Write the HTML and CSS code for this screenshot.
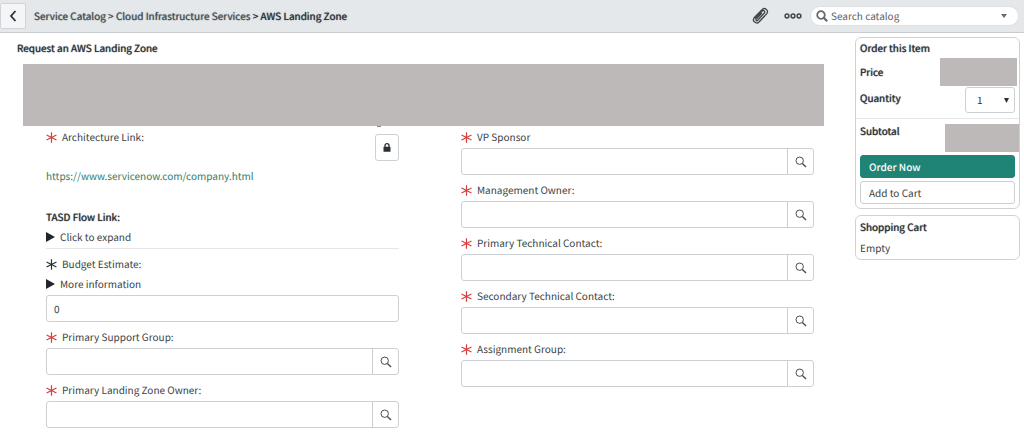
FILE: index.html
```html
<!DOCTYPE html>
<html lang="en">
<head>
<meta charset="utf-8">
<title>AWS Landing Zone</title>
<link rel="stylesheet" href="styles.css">
</head>
<body>
<svg class="sprite" aria-hidden="true">
  <symbol id="star" viewBox="0 0 12 12"><path d="M6 .4v11.2M.6 3.200l10.800 5.600M.6 8.800l10.800-5.600" fill="none" stroke="currentColor" stroke-width="1.300"/></symbol>
  <symbol id="lens" viewBox="0 0 12 12"><circle cx="4.700" cy="4.700" r="3.700" fill="none" stroke="currentColor"/><path d="M7.400 7.400l3.600 3.600" stroke="currentColor" stroke-width="1.400"/></symbol>
</svg>
<header class="topbar">
  <button class="back" aria-label="Back"><svg width="8" height="12" viewBox="0 0 8 12"><path d="M6.500 1L2 6l4.500 5" fill="none" stroke="currentColor" stroke-width="1.800"/></svg></button>
  <nav class="crumbs"><a href="#">Service Catalog</a> &gt; <a href="#">Cloud Infrastructure Services</a> <span class="current">&gt; AWS Landing Zone</span></nav>
  <button class="tool" aria-label="Attachments"><svg width="18" height="18" viewBox="0 0 18 18"><path d="M4 11.500L10.800 4.300c1.800-1.800 4 .2 2.400 2L6.700 13.300c-1 1-2.400-.1-1.400-1.200L11 6M13.800 9L8 15c-2.500 2.600-7.600-.8-4.600-4.500L11 2.600c2.800-2.700 7.300.7 4.600 4.300L8.800 14" fill="none" stroke="currentColor" stroke-width="1.300"/></svg></button>
  <button class="tool more" aria-label="More options"><svg width="18" height="6" viewBox="0 0 18 6"><g fill="none" stroke="currentColor" stroke-width="1.500"><circle cx="3" cy="3" r="1.900"/><circle cx="9" cy="3" r="1.900"/><circle cx="15" cy="3" r="1.900"/></g></svg></button>
  <div class="search">
    <svg width="12" height="12" viewBox="0 0 12 12"><circle cx="5" cy="5" r="3.800" fill="none" stroke="currentColor" stroke-width="1.800"/><path d="M7.600 7.600l3.600 3.600" stroke="currentColor" stroke-width="2.200"/></svg>
    <input type="text" placeholder="Search catalog" aria-label="Search catalog">
    <button class="drop" aria-label="Search options"><svg width="6" height="4" viewBox="0 0 6 4"><path d="M0 0h6L3 4z" fill="currentColor"/></svg></button>
  </div>
</header>
<div class="page">
  <main class="main">
    <h1 class="title">Request an AWS Landing Zone</h1>
    <div class="banner"></div>
    <form class="form">
      <div class="column">
        <div class="arch">
          <span class="label"><svg class="star"><use href="#star"/></svg>Architecture Link:</span>
          <button type="button" class="lock" aria-label="Unlock"><svg width="8" height="9" viewBox="0 0 8 9"><path d="M2 4V2.700a2 2 0 0 1 4 0V4" fill="none" stroke="currentColor" stroke-width="1.300"/><rect x=".5" y="3.800" width="7" height="5" rx=".6" fill="currentColor"/></svg></button>
        </div>
        <a class="link" href="https://www.servicenow.com/company.html">https://www.servicenow.com/company.html</a>
        <div class="flow">
          <h2 class="heading">TASD Flow Link:</h2>
          <button type="button" class="expand"><svg width="9" height="10" viewBox="0 0 9 10"><path d="M0 0l9 5-9 5z" fill="currentColor"/></svg>Click to expand</button>
        </div>
        <div class="budget">
          <label class="label" for="budget"><svg class="star done"><use href="#star"/></svg>Budget Estimate:</label>
          <button type="button" class="expand info"><svg width="9" height="10" viewBox="0 0 9 10"><path d="M0 0l9 5-9 5z" fill="currentColor"/></svg>More information</button>
          <div class="box"><input id="budget" type="text" value="0"></div>
        </div>
        <div class="field">
          <label class="label" for="support"><svg class="star"><use href="#star"/></svg>Primary Support Group:</label>
          <div class="box"><input id="support" type="text"><button type="button" aria-label="Look up"><svg class="lens"><use href="#lens"/></svg></button></div>
        </div>
        <div class="field">
          <label class="label" for="zone"><svg class="star"><use href="#star"/></svg>Primary Landing Zone Owner:</label>
          <div class="box"><input id="zone" type="text"><button type="button" aria-label="Look up"><svg class="lens"><use href="#lens"/></svg></button></div>
        </div>
      </div>
      <div class="column">
        <div class="field">
          <label class="label" for="vp"><svg class="star"><use href="#star"/></svg>VP Sponsor</label>
          <div class="box"><input id="vp" type="text"><button type="button" aria-label="Look up"><svg class="lens"><use href="#lens"/></svg></button></div>
        </div>
        <div class="field">
          <label class="label" for="mgmt"><svg class="star"><use href="#star"/></svg>Management Owner:</label>
          <div class="box"><input id="mgmt" type="text"><button type="button" aria-label="Look up"><svg class="lens"><use href="#lens"/></svg></button></div>
        </div>
        <div class="field">
          <label class="label" for="tech1"><svg class="star"><use href="#star"/></svg>Primary Technical Contact:</label>
          <div class="box"><input id="tech1" type="text"><button type="button" aria-label="Look up"><svg class="lens"><use href="#lens"/></svg></button></div>
        </div>
        <div class="field">
          <label class="label" for="tech2"><svg class="star"><use href="#star"/></svg>Secondary Technical Contact:</label>
          <div class="box"><input id="tech2" type="text"><button type="button" aria-label="Look up"><svg class="lens"><use href="#lens"/></svg></button></div>
        </div>
        <div class="field">
          <label class="label" for="group"><svg class="star"><use href="#star"/></svg>Assignment Group:</label>
          <div class="box"><input id="group" type="text"><button type="button" aria-label="Look up"><svg class="lens"><use href="#lens"/></svg></button></div>
        </div>
      </div>
    </form>
  </main>
  <aside class="side">
    <section class="card">
      <h2 class="heading">Order this Item</h2>
      <div class="row price"><span>Price</span><span class="amount"></span></div>
      <div class="row"><label for="qty">Quantity</label>
        <div class="qty"><select id="qty"><option>1</option><option>2</option></select><svg width="5" height="5" viewBox="0 0 5 5"><path d="M0 0h5L2.500 5z" fill="currentColor"/></svg></div></div>
      <div class="row subtotal"><span>Subtotal</span><span class="amount"></span></div>
      <button class="action primary">Order Now</button>
      <button class="action">Add to Cart</button>
    </section>
    <section class="card cart">
      <h2 class="heading">Shopping Cart</h2>
      <p class="empty">Empty</p>
    </section>
  </aside>
</div>
</body>
</html>
```
FILE: styles.css
```css
* { box-sizing: border-box; }
body {
  margin: 0;
  background: #fff;
  color: #3a3f44;
  font: 10px/20px "Noto Sans CJK SC", "Open Sans", sans-serif;
  text-rendering: geometricPrecision;
}
button, input, select { font: inherit; color: inherit; margin: 0; padding: 0; border: 0; background: none; text-rendering: inherit; }
h1, h2, p { margin: 0; font-size: inherit; }
svg { display: block; flex: none; }
.sprite { display: none; }

.topbar {
  display: flex;
  align-items: center;
  height: 33px;
  padding-right: 5px;
  background: #e4e8eb;
  border-bottom: 1px solid #c9cccf;
}
.back {
  display: flex;
  align-items: center;
  justify-content: center;
  width: 26px;
  height: 26px;
  background: #f4f5f7;
  border: 1px solid #d0d4d8;
  border-radius: 2px;
  color: #2b3035;
}
.crumbs, .title, .heading, .row > span, .row > label {
  font-weight: 400;
  text-shadow: 0 0 1px currentColor;
}
.crumbs { flex: 1; padding-left: 8px; color: #485156; }
.crumbs a { color: inherit; text-decoration: none; }
.current { color: #2b3035; text-shadow: 0 0 1px currentColor; }
.tool { display: flex; color: #42474c; }
.more { margin: 0 8px 0 15px; }
.search {
  display: flex;
  align-items: center;
  width: 209px;
  height: 20px;
  padding: 0 11px 0 5px;
  background: #fff;
  border: 1px solid #dde1e4;
  border-radius: 10px;
  color: #666b70;
}
.search input { flex: 1; min-width: 0; margin-left: 3px; height: 18px; outline: 0; }
.search input::placeholder { color: #5a5f64; opacity: 1; }

.page { display: flex; gap: 31px; padding: 4px 4px 6px 23px; }
.main { flex: 1; min-width: 0; }
.title { margin: 1px 0 6px -6px; color: #2b3035; }
.banner { height: 62px; background: #bdb9b8; }
.form {
  display: grid;
  grid-template-columns: 1fr 1fr;
  gap: 62px;
  padding: 0 10px 0 23px;
}
.label { display: flex; align-items: center; gap: 5px; height: 22px; }
.star { width: 11px; height: 11px; color: #d43f3f; }
.done { color: #2b3035; }
.field { margin-bottom: 4px; }
.box {
  display: flex;
  height: 27px;
  border: 1px solid #ccd0d3;
  border-radius: 3px;
}
.box input { flex: 1; min-width: 0; padding: 0 7px; }
.box button {
  display: flex;
  align-items: center;
  justify-content: center;
  width: 26px;
  border-left: 1px solid #ccd0d3;
}
.lens { width: 12px; height: 12px; color: #4a4f54; }

.arch { display: flex; justify-content: space-between; }
.lock {
  position: relative;
  display: flex;
  align-items: center;
  justify-content: center;
  width: 24px;
  height: 27px;
  margin-top: 8px;
  border: 1px solid #ccd0d3;
  border-radius: 3px;
  color: #2b3035;
}
.lock::before {
  content: "";
  position: absolute;
  top: -9px;
  left: 1px;
  width: 4px;
  height: 1px;
  background: #85888b;
}
.link { display: block; margin-top: 5px; color: #2f7d6b; text-decoration: none; }
.flow { margin-top: 21px; padding-bottom: 1px; border-bottom: 1px solid #e4e6e8; }
.heading { color: #2b3035; }
.expand { display: flex; align-items: center; gap: 5px; }
.expand svg { color: #20262b; }
.budget { margin: 4px 0; }
.info { height: 18px; margin-bottom: 2px; }

.side { width: 165px; }
.card {
  padding: 0 4px 4px;
  border: 1px solid #cfd2d4;
  border-radius: 6px;
}
.row { display: flex; justify-content: space-between; color: #2b3035; }
.amount { width: 77px; height: 28px; background: #bdb9b8; }
.price { margin-right: -2px; line-height: 28px; }
.row label { line-height: 24px; }
.qty { position: relative; margin: 1px 0 5px; }
.qty select {
  display: block;
  width: 50px;
  height: 26px;
  padding-left: 11px;
  border: 1px solid #ccd0d3;
  border-radius: 3px;
  appearance: none;
}
.qty svg { position: absolute; right: 6px; top: 11px; pointer-events: none; }
.subtotal { margin: 0 -4px 3px; padding: 5px 0 0 4px; border-top: 1px solid #e4e6e8; line-height: 14px; }
.subtotal .amount { width: 74px; }
.action {
  display: block;
  width: 100%;
  height: 23px;
  padding: 0 8px;
  border: 1px solid #ccd0d3;
  border-radius: 3px;
  text-align: left;
}
.primary { margin-bottom: 3px; background: #1f8476; border-color: #1f8476; color: #fff; font-weight: 500; }
.cart { margin-top: 6px; padding: 1px 4px 2px; }
.empty { margin-top: 2px; line-height: 18px; }
```
